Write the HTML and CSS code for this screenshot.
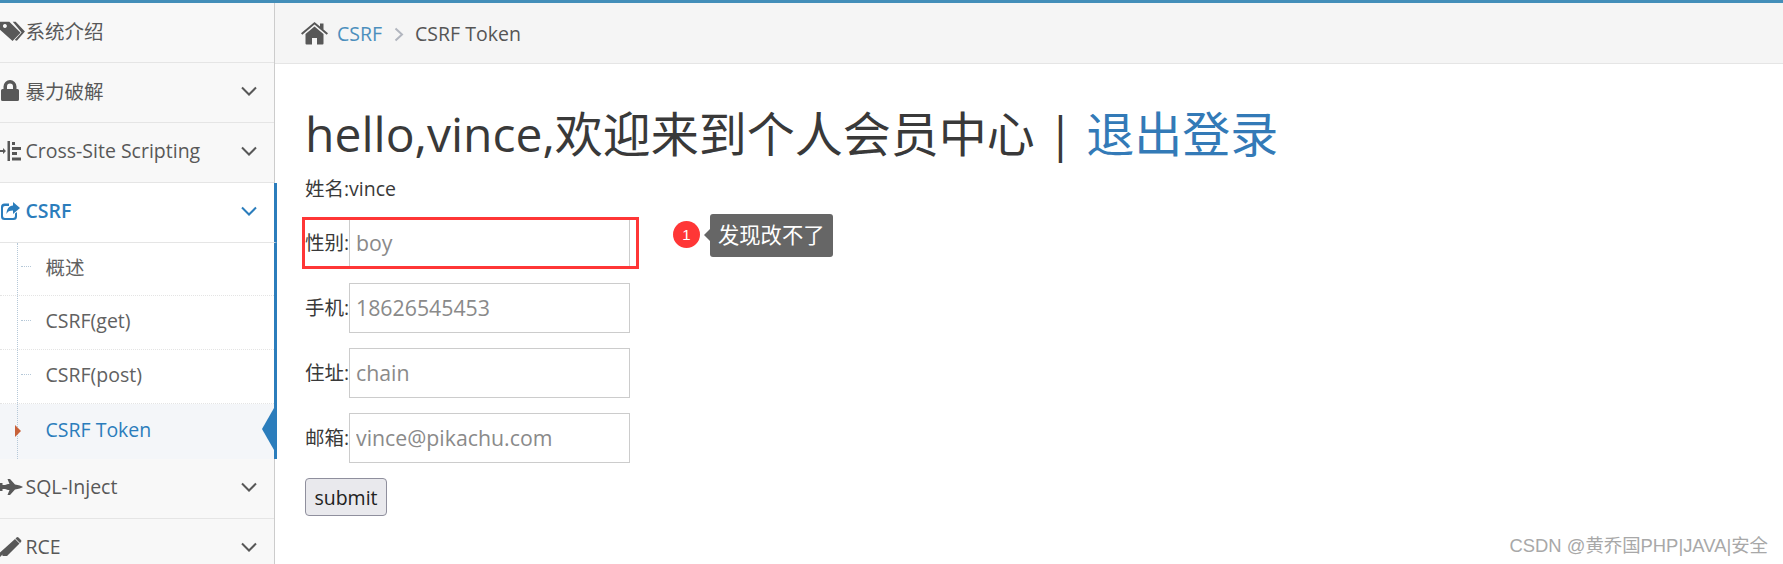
FILE: index.html
```html
<!DOCTYPE html>
<html>

<head>
    <meta charset="utf-8">
    <title>CSRF Token</title>
    <link rel="stylesheet" href="styles.css">
</head>

<body>
    <div class="layout">
        <!-- Sidebar -->
        <ul class="nav">
            <li class="nav-item">
                <span class="nav-icon">
                    <svg width="26" height="22" viewBox="0 0 26 21"><path fill-rule="evenodd" d="M0 1h9.500L21 12.200 12.800 20.600 0 9.200zM5 3.400a2 2 0 1 0 .01 0zM13 1h3L25.400 11 17.200 20.400 15 19.600 22 12z"/></svg>
                </span>
                <span class="nav-text">系统介绍</span>
            </li>
            <li class="nav-item">
                <span class="nav-icon">
                    <svg width="20" height="22" viewBox="0 0 20 22"><path fill-rule="evenodd" d="M3.500 9V6.500a6.500 6.500 0 0 1 13 0V9h1a1.500 1.500 0 0 1 1.500 1.500v9a1.500 1.500 0 0 1-1.500 1.500H2.500A1.500 1.500 0 0 1 1 19.500v-9A1.500 1.500 0 0 1 2.500 9zM7 9h6V6.500a3 3 0 0 0-6 0z"/></svg>
                </span>
                <span class="nav-text">暴力破解</span>
                <svg class="chevron" width="16" height="10" viewBox="0 0 16 10"><path d="M1 1.500l7 7 7-7"/></svg>
            </li>
            <li class="nav-item">
                <span class="nav-icon">
                    <svg width="22" height="20" viewBox="0 0 22 20"><path d="M0 9h3V7l3 3-3 3v-2H0zM7.500 0h2.500v20H7.500zM12 1h3v3h-3zM12 6h9v3h-9zM12 11h5v3h-5zM12 16.500h9v3h-9z"/></svg>
                </span>
                <span class="nav-text">Cross-Site Scripting</span>
                <svg class="chevron" width="16" height="10" viewBox="0 0 16 10"><path d="M1 1.500l7 7 7-7"/></svg>
            </li>
            <li class="nav-item open">
                <span class="nav-icon">
                    <svg width="21" height="20" viewBox="0 0 21 20"><path d="M15 12.500v2.500a2 2 0 0 1-2 2H5a2 2 0 0 1-2-2V7a2 2 0 0 1 2-2h4V2.500H4.500A3.500 3.500 0 0 0 1 6v9.500A3.500 3.500 0 0 0 4.500 19h9a3.500 3.500 0 0 0 3.500-3.500v-4.500z"/><path d="M13 1l7 6-7 6V9.500c-3.500 0-5.500 1-6.500 3.500 0-5 2.500-8 6.500-8.500z"/></svg>
                </span>
                <span class="nav-text">CSRF</span>
                <svg class="chevron" width="16" height="10" viewBox="0 0 16 10"><path d="M1 1.500l7 7 7-7"/></svg>
            </li>
            <li class="submenu">
                <ul>
                    <li class="sub-item"><span>概述</span></li>
                    <li class="sub-item"><span>CSRF(get)</span></li>
                    <li class="sub-item"><span>CSRF(post)</span></li>
                    <li class="sub-item active"><span>CSRF Token</span></li>
                </ul>
            </li>
            <li class="nav-item">
                <span class="nav-icon">
                    <svg width="24" height="20" viewBox="0 0 24 20"><path d="M0 6h2.500v2H5l3-1h1.500L7.500 2h2.500l5 5.500c3.500.5 6.500 1.500 8 2.500-1.500 1-4.500 2-8 2.500L10 18H7.500l2-5H8l-3-1H2.500v2H0z"/></svg>
                </span>
                <span class="nav-text">SQL-Inject</span>
                <svg class="chevron" width="16" height="10" viewBox="0 0 16 10"><path d="M1 1.500l7 7 7-7"/></svg>
            </li>
            <li class="nav-item">
                <span class="nav-icon">
                    <svg width="22" height="22" viewBox="0 0 22 22"><path d="M15 3l4.500 4.500L7 20H2.500v-1.500L0 21v-4.500zM16.500 1.500a1.500 1.500 0 0 1 2 0l2.500 2.500a1.500 1.500 0 0 1 0 2l-1 1L15.500 2.500z"/></svg>
                </span>
                <span class="nav-text">RCE</span>
                <svg class="chevron" width="16" height="10" viewBox="0 0 16 10"><path d="M1 1.500l7 7 7-7"/></svg>
            </li>
        </ul>

        <!-- Main content -->
        <div class="main">
            <div class="breadcrumb">
                <svg class="home" width="27" height="23" viewBox="0 0 27 23"><path d="M13.500 4.500L22.500 12v9.500a1 1 0 0 1-1 1H16V16h-5v6.500H5.500a1 1 0 0 1-1-1V12z"/><path d="M13.500 0L19 4.600V1.500h3.500v6L27 11.300l-1.300 1.500-12.200-10.200L1.300 12.800 0 11.300z"/></svg>
                <a class="crumb-link">CSRF</a>
                <svg class="crumb-sep" width="10" height="15" viewBox="0 0 10 15"><path d="M1.500 1.500l6.500 6-6.500 6"/></svg>
                <span>CSRF Token</span>
            </div>

            <div class="content">
                <h1>hello,vince,欢迎来到个人会员中心 | <a>退出登录</a></h1>
                <p class="name">姓名:vince</p>
                <form class="info-form">
                    <div class="field">
                        <label for="sex">性别:</label>
                        <input type="text" id="sex" placeholder="boy">
                    </div>
                    <div class="field">
                        <label for="phone">手机:</label>
                        <input type="text" id="phone" placeholder="18626545453">
                    </div>
                    <div class="field">
                        <label for="add">住址:</label>
                        <input type="text" id="add" placeholder="chain">
                    </div>
                    <div class="field">
                        <label for="email">邮箱:</label>
                        <input type="text" id="email" placeholder="vince@pikachu.com">
                    </div>
                    <button type="button" class="submit">submit</button>
                </form>
            </div>

            <!-- Screenshot annotations -->
            <div class="mark-box"></div>
            <div class="note">
                <span class="note-badge">1</span>
                <span class="note-tip">发现改不了</span>
            </div>
            <div class="watermark">CSDN @黄乔国PHP|JAVA|安全</div>
        </div>
    </div>
</body>

</html>
```

FILE: styles.css
```css
/* Basic reset and body styling */
* {
    box-sizing: border-box;
}

html,
body {
    height: 100%;
    margin: 0;
    overflow: hidden;
}

body {
    font-family: "Open Sans", "Noto Sans CJK SC", sans-serif;
    font-size: 19.5px;
    color: #393939;
    background-color: #fff;
    border-top: 3px solid #438eb9;
}

ul {
    list-style: none;
    margin: 0;
    padding: 0;
}

.layout {
    display: flex;
    height: 561px;
}

/* Sidebar */
.nav {
    width: 275px;
    flex: none;
    background-color: #f8f8f8;
    border-right: 1px solid #ccc;
    color: #585858;
}

.nav-item {
    display: flex;
    align-items: center;
    height: 60px;
    padding-right: 17px;
    padding-bottom: 4px;
    border-bottom: 1px solid #e5e5e5;
}

.nav-icon {
    display: flex;
    width: 25.5px;
    flex: none;
    align-items: center;
}

.nav-icon svg {
    fill: #585858;
}

.nav-text {
    flex: 1;
    white-space: nowrap;
}

.chevron {
    fill: none;
    stroke: #585858;
    stroke-width: 2;
}

.nav-item.open,
.submenu {
    position: relative;
    width: 277px;
    background-color: #fff;
    border-right: 3px solid #2b7dbc;
}

.nav-item.open {
    color: #2b7dbc;
    font-weight: 600;
}

.nav-item.open svg {
    fill: #2b7dbc;
}

.nav-item.open .chevron {
    fill: none;
    stroke: #2b7dbc;
}

/* Sub items, with the dotted tree lines */
.submenu::before {
    content: "";
    position: absolute;
    left: 17px;
    top: 0;
    bottom: 0;
    z-index: 1;
    border-left: 1px dotted #b5c8d8;
}

.sub-item {
    position: relative;
    display: flex;
    align-items: center;
    height: 54px;
    padding-left: 45.5px;
    padding-bottom: 5px;
    color: #616161;
    border-bottom: 1px dotted #e4e4e4;
}

.sub-item::before {
    content: "";
    position: absolute;
    left: 21px;
    top: calc(50% - 3px);
    width: 10px;
    border-top: 1px dotted #b5c8d8;
}

.sub-item:first-child {
    height: 53px;
}

.sub-item.active {
    height: 55px;
    color: #2b7dbc;
    background-color: #f4f6f9;
    border-bottom: none;
}

.sub-item.active::before {
    left: 15px;
    top: 21px;
    width: 0;
    z-index: 2;
    border-top: 6.5px solid transparent;
    border-bottom: 6.5px solid transparent;
    border-left: 6px solid #c86139;
}

.sub-item.active::after {
    content: "";
    position: absolute;
    right: 0;
    top: 4px;
    border-top: 21px solid transparent;
    border-bottom: 21px solid transparent;
    border-right: 12px solid #2b7dbc;
}

/* Breadcrumb */
.main {
    position: relative;
    flex: 1;
}

.breadcrumb {
    display: flex;
    align-items: center;
    height: 61px;
    padding-left: 26px;
    background-color: #f5f5f5;
    border-bottom: 1px solid #e5e5e5;
    color: #555;
}

.home {
    fill: #585858;
    margin-right: 9px;
}

.crumb-link {
    color: #4c8fbd;
}

.crumb-sep {
    fill: none;
    stroke: #b2b6bf;
    stroke-width: 2;
    margin: 3px 11px 0 12px;
}

/* Page content */
.content {
    padding: 45px 0 0 30px;
}

h1 {
    font-size: 48px;
    font-weight: 400;
    line-height: 50px;
    margin: 0 0 17px 0;
    white-space: nowrap;
}

h1 a {
    color: #337ab7;
}

.name {
    line-height: 26px;
    margin: 0 0 16px 0;
}

.info-form {
    display: flex;
    flex-direction: column;
    align-items: flex-start;
    gap: 15px;
}

.field {
    display: flex;
    align-items: center;
}

.field label {
    width: 44px;
    padding-bottom: 3px;
    white-space: nowrap;
}

.field input {
    width: 281px;
    height: 50px;
    padding: 0 6px 2px 6px;
    font: inherit;
    font-size: 21.3px;
    background-color: #fff;
    border: 1px solid #ccc;
    border-radius: 0;
}

.field input::placeholder {
    color: #8a8a8a;
    opacity: 1;
}

.submit {
    width: 82px;
    height: 38px;
    padding: 0;
    font: inherit;
    color: #222;
    background-color: #e9e9ed;
    border: 1px solid #8f8f9d;
    border-radius: 4px;
}

/* Screenshot annotations */
.mark-box {
    position: absolute;
    left: 27px;
    top: 214px;
    width: 337px;
    height: 52px;
    border: 3px solid #ff3636;
}

.note {
    position: absolute;
    left: 398px;
    top: 211px;
    display: flex;
    align-items: center;
}

.note-badge {
    width: 27px;
    height: 27px;
    margin-right: 10px;
    margin-top: -2px;
    border-radius: 50%;
    background-color: #ff3636;
    color: #fff;
    font-family: "Liberation Sans", sans-serif;
    font-size: 15px;
    line-height: 27px;
    text-align: center;
}

.note-tip {
    position: relative;
    padding: 0 8px;
    height: 43px;
    line-height: 42px;
    font-size: 21.3px;
    background-color: #666;
    color: #fff;
    border-radius: 3px;
}

.note-tip::before {
    content: "";
    position: absolute;
    left: -6px;
    top: 15px;
    border-top: 6px solid transparent;
    border-bottom: 6px solid transparent;
    border-right: 6px solid #666;
}

.watermark {
    position: absolute;
    right: 15px;
    top: 528px;
    font-family: "Liberation Sans", "Noto Sans CJK SC", sans-serif;
    font-size: 18.4px;
    color: #a8a8a8;
    white-space: nowrap;
}
```
